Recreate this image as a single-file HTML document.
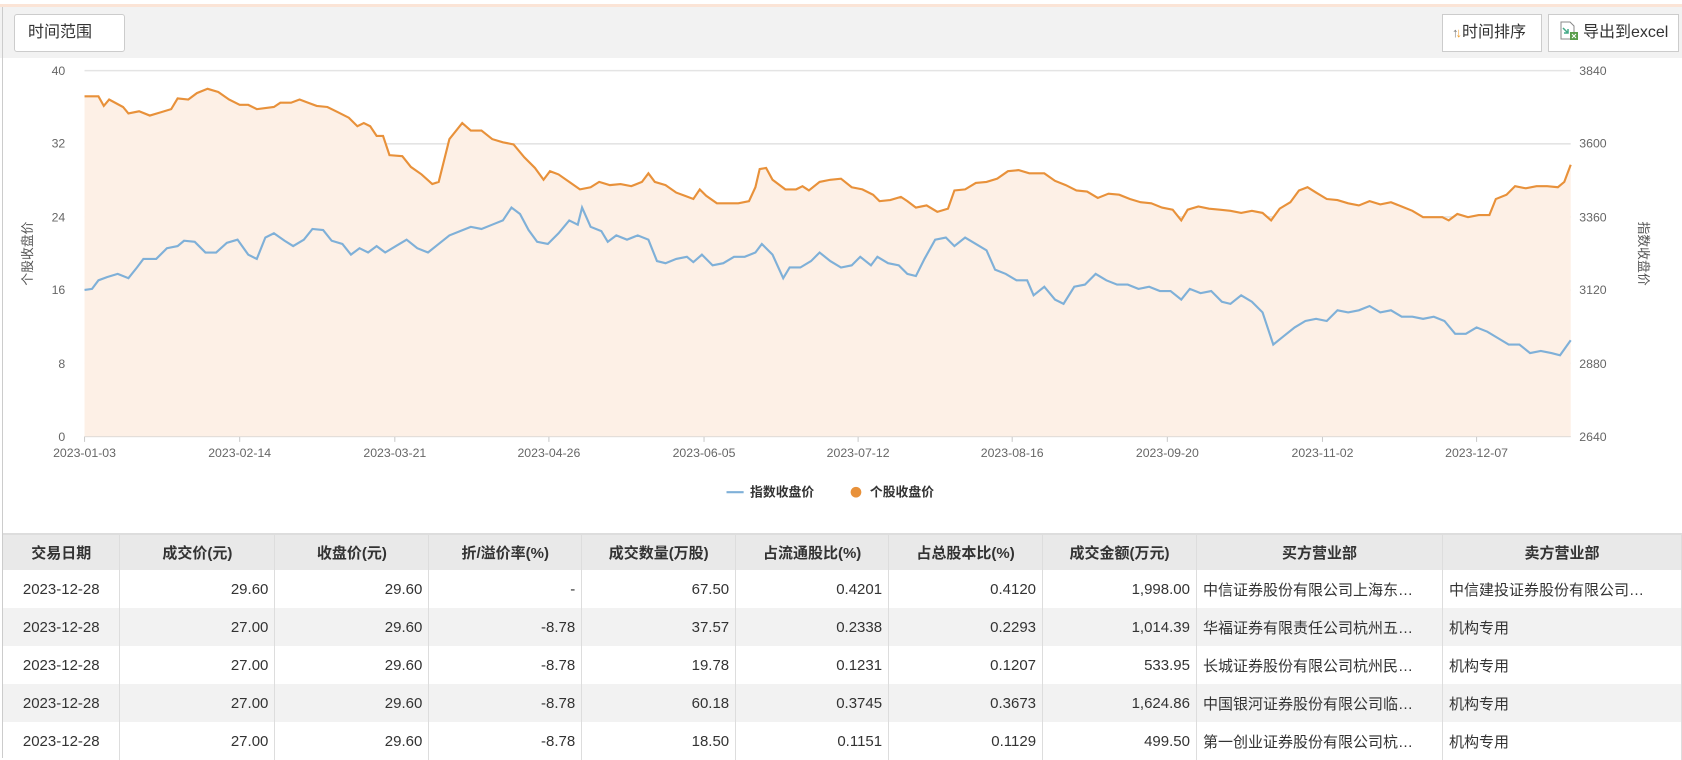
<!DOCTYPE html>
<html><head><meta charset="utf-8"><style>
*{margin:0;padding:0;box-sizing:border-box}
body{width:1682px;height:758px;overflow:hidden;background:#fff;font-family:"Liberation Sans","Noto Sans CJK SC",sans-serif;position:relative}
.top{position:absolute;left:0;top:4px;width:1682px;height:3px;background:#fbe4d6}
.bar{position:absolute;left:0;top:7px;width:1682px;height:51px;background:#f2f2f2}
.lb{position:absolute;left:2px;top:7px;width:1px;height:751px;background:#ccc}
.btn{position:absolute;top:14px;height:38px;background:#fff;border:1px solid #ccc;font-size:16px;color:#333;line-height:36px}
svg{position:absolute;left:0;top:0}
table{position:absolute;left:3px;top:533px;border-collapse:collapse;table-layout:fixed;font-size:15px;color:#333}
th{background:#e9e9e9;height:36px;font-weight:bold;border-right:1px solid #ddd;border-top:2px solid #ddd;font-size:15px}
td{height:38px;border-right:1px solid #ddd;padding:0 6px;white-space:nowrap;overflow:hidden}
td.r{text-align:right}td.c{text-align:center}
tr.g td{background:#f2f2f2}
</style></head><body>
<div class="top"></div><div class="bar"></div><div class="lb"></div>
<div class="btn" style="left:14px;width:111px;padding-left:13px;border-radius:3px">时间范围</div>
<div class="btn" style="left:1442px;width:100px;padding-left:9px"><span style="font-size:13px;color:#777">↑</span><span style="font-size:13px;color:#f0a030;margin-left:-3px">↓</span>时间排序</div>
<div class="btn" style="left:1548px;width:131px;padding-left:10px"><svg style="position:relative;display:inline-block;vertical-align:-4px;margin-right:4px" width="20" height="20" viewBox="0 0 20 20"><path d="M2 1h9l4 4v13H2z" fill="#fff" stroke="#888"/><path d="M4 7l5 5M9 8v4H5" stroke="#4a8" fill="none" stroke-width="1.5"/><rect x="11" y="11" width="8" height="8" fill="#5a9e4b"/><path d="M13 13l4 4M17 13l-4 4" stroke="#fff"/></svg>导出到excel</div>
<svg width="1682" height="520" viewBox="0 0 1572 486" preserveAspectRatio="none">
<g stroke="#e4e4e4" stroke-width="1.5">
<line x1="79" y1="66" x2="1468" y2="66"/><line x1="79" y1="134.4" x2="1468" y2="134.4"/><line x1="79" y1="202.8" x2="1468" y2="202.8"/><line x1="79" y1="271.2" x2="1468" y2="271.2"/><line x1="79" y1="339.6" x2="1468" y2="339.6"/></g>
<line x1="79" y1="408" x2="1468" y2="408" stroke="#ccc"/>
<g font-size="11.5" fill="#666" text-anchor="end"><text x="61" y="70">40</text><text x="61" y="138">32</text><text x="61" y="207">24</text><text x="61" y="275">16</text><text x="61" y="344">8</text><text x="61" y="412">0</text></g>
<g font-size="11.5" fill="#666"><text x="1476" y="70">3840</text><text x="1476" y="138">3600</text><text x="1476" y="207">3360</text><text x="1476" y="275">3120</text><text x="1476" y="344">2880</text><text x="1476" y="412">2640</text></g>
<g font-size="11.5" fill="#666" text-anchor="middle"><text x="79" y="427">2023-01-03</text><text x="224" y="427">2023-02-14</text><text x="369" y="427">2023-03-21</text><text x="513" y="427">2023-04-26</text><text x="658" y="427">2023-06-05</text><text x="802" y="427">2023-07-12</text><text x="946" y="427">2023-08-16</text><text x="1091" y="427">2023-09-20</text><text x="1236" y="427">2023-11-02</text><text x="1380" y="427">2023-12-07</text></g>
<g stroke="#ccc"><line x1="79" y1="408" x2="79" y2="413"/><line x1="224" y1="408" x2="224" y2="413"/><line x1="369" y1="408" x2="369" y2="413"/><line x1="513" y1="408" x2="513" y2="413"/><line x1="658" y1="408" x2="658" y2="413"/><line x1="802" y1="408" x2="802" y2="413"/><line x1="946" y1="408" x2="946" y2="413"/><line x1="1091" y1="408" x2="1091" y2="413"/><line x1="1236" y1="408" x2="1236" y2="413"/><line x1="1380" y1="408" x2="1380" y2="413"/></g>
<text transform="translate(30,237) rotate(-90)" font-size="12" fill="#555" text-anchor="middle">个股收盘价</text>
<text transform="translate(1532,237) rotate(90)" font-size="12" fill="#555" text-anchor="middle">指数收盘价</text>
<polygon fill="#fdf0e6" points="79,408 79,90 92,90 97,99 102,93 115,100 120,106 130,104 140,108 150,105 160,102 166,92 176,93 184,87 194,83 204,86 214,93 224,98 232,98 240,102 256,100 262,96 272,96 280,93 288,96 296,99 306,100 316,105 326,110 334,118 340,115 346,118 352,127 358,127 364,145 376,146 384,156 394,163 404,172 410,170 420,130 432,115 440,122 450,122 460,130 470,133 480,135 490,147 500,157 508,168 514,160 522,163 532,170 542,177 552,175 560,170 570,173 580,172 590,174 600,170 606,162 612,170 622,173 632,180 640,183 648,186 654,177 660,183 670,190 680,190 690,190 700,188 706,175 710,158 716,157 722,168 734,177 744,177 750,174 756,178 766,170 776,168 786,167 796,175 806,177 816,182 822,188 832,187 842,184 848,188 856,194 866,192 876,198 886,195 892,178 902,177 912,171 922,170 932,167 942,160 952,159 962,162 976,162 986,169 996,173 1006,178 1016,179 1026,185 1036,181 1046,182 1056,186 1066,189 1076,190 1086,194 1096,196 1104,206 1110,196 1120,193 1130,195 1140,196 1150,197 1160,199 1170,197 1180,199 1188,206 1196,195 1206,189 1214,178 1222,175 1230,180 1240,186 1250,187 1260,190 1270,192 1280,188 1290,191 1300,189 1310,193 1320,197 1330,203 1340,203 1348,203 1354,206 1362,200 1372,203 1382,201 1392,201 1398,186 1408,182 1416,174 1426,176 1436,174 1446,174 1456,175 1462,170 1468,154 1468,408"/>
<polyline fill="none" stroke="#e8913a" stroke-width="2" points="79,90 92,90 97,99 102,93 115,100 120,106 130,104 140,108 150,105 160,102 166,92 176,93 184,87 194,83 204,86 214,93 224,98 232,98 240,102 256,100 262,96 272,96 280,93 288,96 296,99 306,100 316,105 326,110 334,118 340,115 346,118 352,127 358,127 364,145 376,146 384,156 394,163 404,172 410,170 420,130 432,115 440,122 450,122 460,130 470,133 480,135 490,147 500,157 508,168 514,160 522,163 532,170 542,177 552,175 560,170 570,173 580,172 590,174 600,170 606,162 612,170 622,173 632,180 640,183 648,186 654,177 660,183 670,190 680,190 690,190 700,188 706,175 710,158 716,157 722,168 734,177 744,177 750,174 756,178 766,170 776,168 786,167 796,175 806,177 816,182 822,188 832,187 842,184 848,188 856,194 866,192 876,198 886,195 892,178 902,177 912,171 922,170 932,167 942,160 952,159 962,162 976,162 986,169 996,173 1006,178 1016,179 1026,185 1036,181 1046,182 1056,186 1066,189 1076,190 1086,194 1096,196 1104,206 1110,196 1120,193 1130,195 1140,196 1150,197 1160,199 1170,197 1180,199 1188,206 1196,195 1206,189 1214,178 1222,175 1230,180 1240,186 1250,187 1260,190 1270,192 1280,188 1290,191 1300,189 1310,193 1320,197 1330,203 1340,203 1348,203 1354,206 1362,200 1372,203 1382,201 1392,201 1398,186 1408,182 1416,174 1426,176 1436,174 1446,174 1456,175 1462,170 1468,154"/>
<polyline fill="none" stroke="#7fb0d8" stroke-width="2" points="79,271 86,270 92,262 100,259 110,256 120,260 128,250 134,242 146,242 156,232 166,230 172,225 182,226 192,236 202,236 212,227 222,224 232,238 240,242 248,222 256,218 266,225 274,230 284,224 292,214 302,215 310,225 320,228 328,238 336,232 344,236 352,230 360,236 370,230 380,224 390,232 400,236 410,228 420,220 430,216 440,212 450,214 460,210 470,206 478,194 486,200 494,215 502,226 512,228 522,218 532,206 540,210 544,194 552,212 562,216 568,226 576,220 586,224 596,220 606,224 614,244 622,246 632,242 642,240 648,245 656,238 666,248 676,246 686,240 696,240 706,236 712,228 722,238 732,260 738,250 748,250 758,244 766,236 776,244 786,250 796,248 804,240 814,248 820,240 830,246 840,248 848,256 856,258 864,242 874,224 884,222 892,230 902,222 912,228 922,234 930,252 940,256 950,262 960,262 966,276 976,268 986,280 994,284 1004,268 1014,266 1024,256 1034,262 1044,266 1054,266 1064,270 1074,268 1084,272 1094,272 1104,280 1112,270 1122,274 1132,272 1142,282 1150,284 1160,276 1170,282 1180,292 1190,322 1200,314 1210,306 1220,300 1230,298 1240,300 1250,290 1260,292 1270,290 1280,286 1290,292 1300,290 1310,296 1320,296 1330,298 1340,296 1350,300 1360,312 1370,312 1380,306 1390,310 1400,316 1410,322 1420,322 1430,330 1440,328 1450,330 1458,332 1468,318"/>
<line x1="679" y1="460" x2="695" y2="460" stroke="#7fb0d8" stroke-width="2"/>
<text x="701" y="464" font-size="12" fill="#333" font-weight="bold">指数收盘价</text>
<circle cx="800" cy="460" r="5" fill="#e8913a"/>
<text x="813" y="464" font-size="12" fill="#333" font-weight="bold">个股收盘价</text>
</svg>
<table>
<colgroup><col style="width:117px"><col style="width:155px"><col style="width:154px"><col style="width:153px"><col style="width:154px"><col style="width:153px"><col style="width:154px"><col style="width:154px"><col style="width:246px"><col style="width:239px"></colgroup>
<tr><th>交易日期</th><th>成交价(元)</th><th>收盘价(元)</th><th>折/溢价率(%)</th><th>成交数量(万股)</th><th>占流通股比(%)</th><th>占总股本比(%)</th><th>成交金额(万元)</th><th>买方营业部</th><th>卖方营业部</th></tr>
<tr><td class="c">2023-12-28</td><td class="r">29.60</td><td class="r">29.60</td><td class="r">-</td><td class="r">67.50</td><td class="r">0.4201</td><td class="r">0.4120</td><td class="r">1,998.00</td><td>中信证券股份有限公司上海东…</td><td>中信建投证券股份有限公司…</td></tr>
<tr class="g"><td class="c">2023-12-28</td><td class="r">27.00</td><td class="r">29.60</td><td class="r">-8.78</td><td class="r">37.57</td><td class="r">0.2338</td><td class="r">0.2293</td><td class="r">1,014.39</td><td>华福证券有限责任公司杭州五…</td><td>机构专用</td></tr>
<tr><td class="c">2023-12-28</td><td class="r">27.00</td><td class="r">29.60</td><td class="r">-8.78</td><td class="r">19.78</td><td class="r">0.1231</td><td class="r">0.1207</td><td class="r">533.95</td><td>长城证券股份有限公司杭州民…</td><td>机构专用</td></tr>
<tr class="g"><td class="c">2023-12-28</td><td class="r">27.00</td><td class="r">29.60</td><td class="r">-8.78</td><td class="r">60.18</td><td class="r">0.3745</td><td class="r">0.3673</td><td class="r">1,624.86</td><td>中国银河证券股份有限公司临…</td><td>机构专用</td></tr>
<tr><td class="c">2023-12-28</td><td class="r">27.00</td><td class="r">29.60</td><td class="r">-8.78</td><td class="r">18.50</td><td class="r">0.1151</td><td class="r">0.1129</td><td class="r">499.50</td><td>第一创业证券股份有限公司杭…</td><td>机构专用</td></tr>
</table>
</body></html>
